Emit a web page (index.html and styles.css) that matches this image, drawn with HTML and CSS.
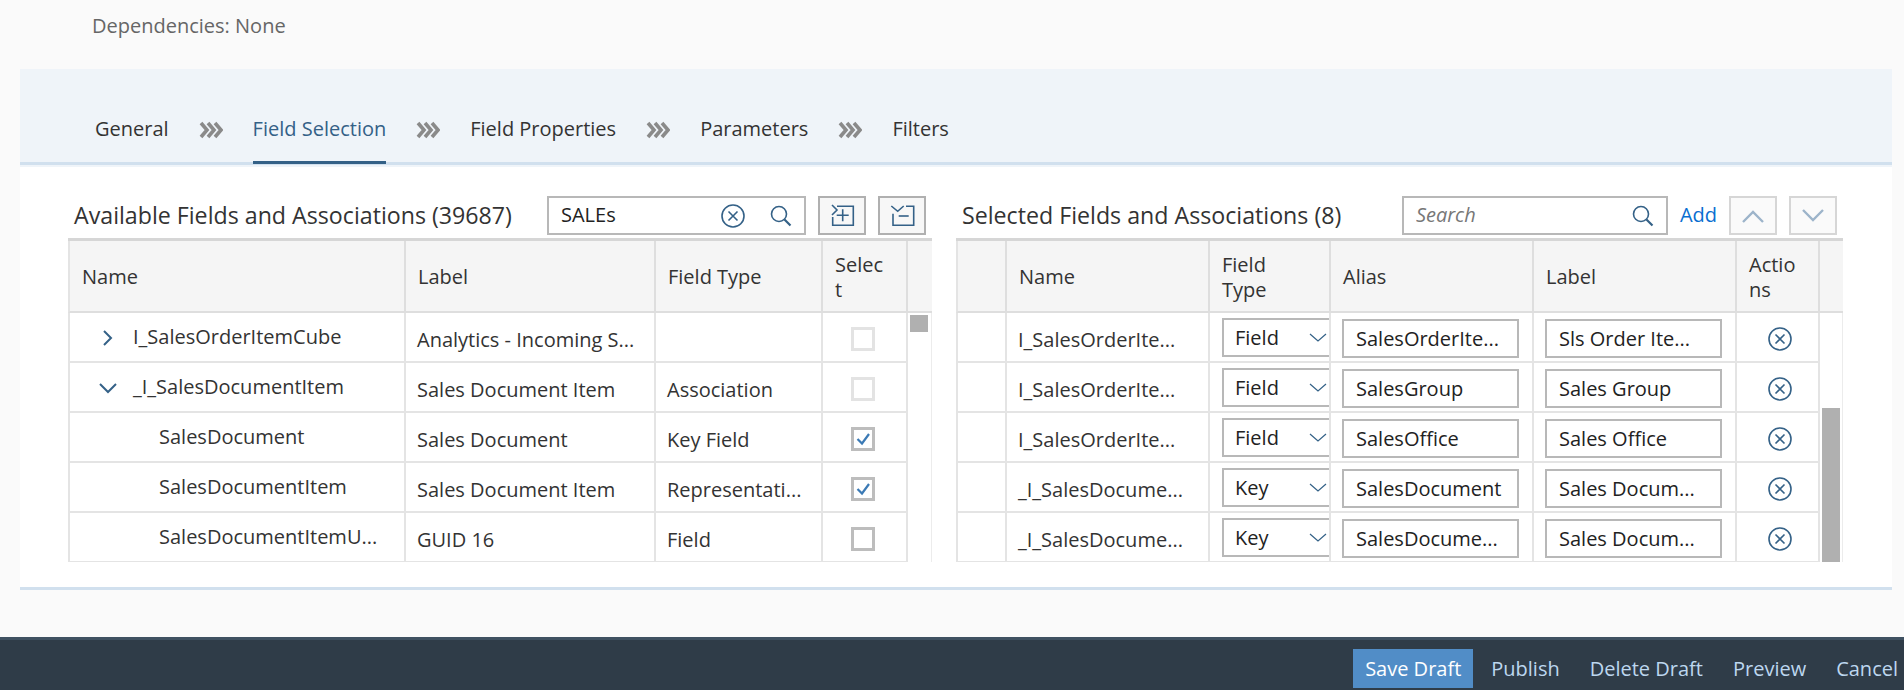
FILE: index.html
```html
<!DOCTYPE html>
<html lang="en">
<head>
  <meta charset="UTF-8">
  <title>Custom CDS View</title>
  <link rel="stylesheet" href="styles.css">
</head>
<body>
  <svg class="defs" width="0" height="0">
    <symbol id="i-chevrons" viewBox="0 0 24 18">
      <path d="M2 2l6 7-6 7M9 2l6 7-6 7M16 2l6 7-6 7" fill="none" stroke="#8a8a8a" stroke-width="3.6"/>
    </symbol>
    <symbol id="i-clear" viewBox="0 0 24 24">
      <circle cx="12" cy="12" r="11" fill="none" stroke="#346187" stroke-width="1.6"/>
      <path d="M7.5 7.5l9 9M16.5 7.5l-9 9" fill="none" stroke="#346187" stroke-width="1.6"/>
    </symbol>
    <symbol id="i-search" viewBox="0 0 22 22">
      <circle cx="9" cy="9" r="7.5" fill="none" stroke="#346187" stroke-width="1.6"/>
      <path d="M14.5 14.5l6 6" fill="none" stroke="#346187" stroke-width="2.2"/>
    </symbol>
    <symbol id="i-check" viewBox="0 0 18 18">
      <path d="M3.5 9l4.5 4.5L15 4" fill="none" stroke="#3b7ab5" stroke-width="2.2"/>
    </symbol>
  </svg>

  <div class="deps">Dependencies: None</div>

  <main class="panel">
    <nav class="tabs">
      <div class="tab-row">
        <a class="tab">General</a>
        <svg class="tab-sep"><use href="#i-chevrons"/></svg>
        <a class="tab active">Field Selection</a>
        <svg class="tab-sep"><use href="#i-chevrons"/></svg>
        <a class="tab">Field Properties</a>
        <svg class="tab-sep"><use href="#i-chevrons"/></svg>
        <a class="tab">Parameters</a>
        <svg class="tab-sep"><use href="#i-chevrons"/></svg>
        <a class="tab">Filters</a>
      </div>
    </nav>

    <div class="content">
      <section class="pane pane-left">
        <header class="pane-head">
          <h2>Available Fields and Associations (39687)</h2>
          <div class="search search-left">
            <input type="text" value="SALEs">
            <svg class="search-clear"><use href="#i-clear"/></svg>
            <svg class="search-icon"><use href="#i-search"/></svg>
          </div>
          <button class="tool">
            <svg width="26" height="24" viewBox="0 0 26 24" fill="none" stroke="#346187" stroke-width="1.6">
              <path d="M3 1l5 5-5 5M8 2.3h16.3v19H3.7V13"/>
              <path d="M7.7 11.3h12M13.7 5.3v12"/>
            </svg>
          </button>
          <button class="tool">
            <svg width="26" height="24" viewBox="0 0 26 24" fill="none" stroke="#346187" stroke-width="1.6">
              <path d="M2.3 2l6.4 5.3L14.7 2M17 2.3h7.7v19H4V9.7"/>
              <path d="M9.7 12h10"/>
            </svg>
          </button>
        </header>

        <div class="grid-wrap">
          <table class="grid">
            <colgroup>
              <col class="w-338"><col class="w-250"><col class="w-167"><col class="w-85"><col class="w-24">
            </colgroup>
            <thead>
              <tr><th>Name</th><th>Label</th><th>Field Type</th><th class="narrow">Select</th><th class="scroll-head"></th></tr>
            </thead>
            <tbody>
              <tr>
                <td class="tree up"><svg class="twist" viewBox="0 0 18 18"><path d="M5 2l7 7-7 7"/></svg>I_SalesOrderItemCube</td>
                <td>Analytics - Incoming S...</td>
                <td></td>
                <td class="check"><span class="box off"></span></td>
                <td class="scroll-cell"></td>
              </tr>
              <tr>
                <td class="tree up"><svg class="twist" viewBox="0 0 18 18"><path d="M1 5l8 8 8-8"/></svg>_I_SalesDocumentItem</td>
                <td>Sales Document Item</td>
                <td>Association</td>
                <td class="check"><span class="box off"></span></td>
                <td class="scroll-cell"></td>
              </tr>
              <tr>
                <td class="leaf up">SalesDocument</td>
                <td>Sales Document</td>
                <td>Key Field</td>
                <td class="check"><span class="box"><svg><use href="#i-check"/></svg></span></td>
                <td class="scroll-cell"></td>
              </tr>
              <tr>
                <td class="leaf up">SalesDocumentItem</td>
                <td>Sales Document Item</td>
                <td>Representati...</td>
                <td class="check"><span class="box"><svg><use href="#i-check"/></svg></span></td>
                <td class="scroll-cell"></td>
              </tr>
              <tr>
                <td class="leaf up">SalesDocumentItemU...</td>
                <td>GUID 16</td>
                <td>Field</td>
                <td class="check"><span class="box"></span></td>
                <td class="scroll-cell"></td>
              </tr>
            </tbody>
          </table>
          <div class="thumb thumb-left"></div>
        </div>
      </section>

      <section class="pane pane-right">
        <header class="pane-head">
          <h2>Selected Fields and Associations (8)</h2>
          <div class="search search-right">
            <input type="text" placeholder="Search">
            <svg class="search-icon"><use href="#i-search"/></svg>
          </div>
          <a class="add">Add</a>
          <button class="tool faded">
            <svg width="24" height="14" viewBox="0 0 24 14" fill="none" stroke="#9db4ca" stroke-width="2.4"><path d="M2 13L12 3l10 10"/></svg>
          </button>
          <button class="tool faded">
            <svg width="24" height="14" viewBox="0 0 24 14" fill="none" stroke="#9db4ca" stroke-width="2.4"><path d="M2 1l10 10L22 1"/></svg>
          </button>
        </header>

        <div class="grid-wrap">
          <table class="grid">
            <colgroup>
              <col class="w-51"><col class="w-203"><col class="w-121"><col class="w-203"><col class="w-203"><col class="w-83"><col class="w-23">
            </colgroup>
            <thead>
              <tr><th></th><th>Name</th><th class="narrow">Field Type</th><th>Alias</th><th>Label</th><th class="narrow">Actions</th><th class="scroll-head"></th></tr>
            </thead>
            <tbody>
              <tr>
                <td></td>
                <td>I_SalesOrderIte...</td>
                <td class="clip"><span class="select">Field<svg viewBox="0 0 18 9"><path d="M1 1l8 7 8-7"/></svg></span></td>
                <td class="edit"><input class="field" value="SalesOrderIte..."></td>
                <td class="edit"><input class="field" value="Sls Order Ite..."></td>
                <td class="action"><svg class="remove"><use href="#i-clear"/></svg></td>
                <td class="scroll-cell"></td>
              </tr>
              <tr>
                <td></td>
                <td>I_SalesOrderIte...</td>
                <td class="clip"><span class="select">Field<svg viewBox="0 0 18 9"><path d="M1 1l8 7 8-7"/></svg></span></td>
                <td class="edit"><input class="field" value="SalesGroup"></td>
                <td class="edit"><input class="field" value="Sales Group"></td>
                <td class="action"><svg class="remove"><use href="#i-clear"/></svg></td>
                <td class="scroll-cell"></td>
              </tr>
              <tr>
                <td></td>
                <td>I_SalesOrderIte...</td>
                <td class="clip"><span class="select">Field<svg viewBox="0 0 18 9"><path d="M1 1l8 7 8-7"/></svg></span></td>
                <td class="edit"><input class="field" value="SalesOffice"></td>
                <td class="edit"><input class="field" value="Sales Office"></td>
                <td class="action"><svg class="remove"><use href="#i-clear"/></svg></td>
                <td class="scroll-cell"></td>
              </tr>
              <tr>
                <td></td>
                <td>_I_SalesDocume...</td>
                <td class="clip"><span class="select">Key<svg viewBox="0 0 18 9"><path d="M1 1l8 7 8-7"/></svg></span></td>
                <td class="edit"><input class="field" value="SalesDocument"></td>
                <td class="edit"><input class="field" value="Sales Docum..."></td>
                <td class="action"><svg class="remove"><use href="#i-clear"/></svg></td>
                <td class="scroll-cell"></td>
              </tr>
              <tr>
                <td></td>
                <td>_I_SalesDocume...</td>
                <td class="clip"><span class="select">Key<svg viewBox="0 0 18 9"><path d="M1 1l8 7 8-7"/></svg></span></td>
                <td class="edit"><input class="field" value="SalesDocume..."></td>
                <td class="edit"><input class="field" value="Sales Docum..."></td>
                <td class="action"><svg class="remove"><use href="#i-clear"/></svg></td>
                <td class="scroll-cell"></td>
              </tr>
            </tbody>
          </table>
          <div class="thumb thumb-right"></div>
        </div>
      </section>
    </div>
  </main>

  <footer class="footer">
    <button class="foot-btn primary">Save Draft</button>
    <button class="foot-btn">Publish</button>
    <button class="foot-btn">Delete Draft</button>
    <button class="foot-btn">Preview</button>
    <button class="foot-btn">Cancel</button>
  </footer>
</body>
</html>
```

FILE: styles.css
```css
* { box-sizing: border-box; }
html, body { height: 690px; overflow: hidden; }
body { margin: 0; background: #fafafa; color: #333; font-family: "Open Sans", "Liberation Sans", sans-serif; font-size: 20px; }
.defs { display: block; height: 0; }

.deps { height: 69px; padding: 14px 0 0 92px; color: #666; line-height: 24px; }

.panel { margin: 0 12px 47px 20px; background: #fff; border-bottom: 3px solid #d1e0ee; }

.tabs { height: 98px; background: #eff4f9; }
.tab-row { display: flex; align-items: center; gap: 30px; height: 96px; padding: 29px 0 0 75px; border-bottom: 3px solid #d1e0ee; }
.tab { display: flex; align-items: center; height: 64px; margin-bottom: -3px; padding-bottom: 3px; border-bottom: 3px solid transparent; color: #333; }
.tab.active { color: #346187; border-bottom-color: #346187; }
.tab-sep { width: 24px; height: 18px; }

.content { display: flex; gap: 24px; padding: 29px 0 25px 48px; }
.pane-left { width: 864px; }
.pane-right { width: 887px; }
.pane-head { display: flex; align-items: center; gap: 12px; height: 39px; margin-bottom: 3px; padding: 0 6px; }
.pane-head h2 { margin: 0 auto 0 0; padding-bottom: 2px; font-size: 23.2px; font-weight: 400; color: #333; white-space: nowrap; }

.search { position: relative; height: 39px; background: #fff; border: 2px solid #b8b8b8; }
.search input { width: 100%; height: 100%; padding: 0 0 2px 12px; border: 0; outline: 0; background: none; font: inherit; color: #222; }
.search input::placeholder { color: #777; font-style: italic; opacity: 1; }
.search-left { width: 259px; }
.search-right { width: 266px; }
.search-clear { position: absolute; top: 6px; left: 172px; width: 24px; height: 24px; }
.search-icon { position: absolute; top: 7px; right: 12px; width: 22px; height: 22px; }

.tool { display: flex; align-items: center; justify-content: center; width: 48px; height: 39px; padding: 0; background: #f7f7f7; border: 2px solid #b0b0b0; }
.tool.faded { background: #fafafa; border-color: #d6d6d6; }
.add { padding-bottom: 2px; color: #0a6ed1; }

.grid-wrap { position: relative; height: 324px; overflow: hidden; border-top: 3px solid #d6d6d6; }
.grid { width: 100%; border-collapse: separate; border-spacing: 0; table-layout: fixed; }
.w-338 { width: 338px; } .w-250 { width: 250px; } .w-167 { width: 167px; } .w-85 { width: 85px; } .w-24 { width: 24px; }
.w-51 { width: 51px; } .w-203 { width: 203px; } .w-121 { width: 121px; } .w-83 { width: 83px; } .w-23 { width: 23px; }

.grid th, .grid td { padding: 0 12px; border-right: 2px solid #e4e4e4; border-bottom: 2px solid #e4e4e4; white-space: nowrap; overflow: hidden; font-weight: 400; text-align: left; }
.grid th:first-child, .grid td:first-child { border-left: 2px solid #e4e4e4; }
.grid th { height: 72px; padding-top: 1px; background: #f5f5f5; color: #333; white-space: normal; line-height: 25px; border-color: #dedede; }
.grid th.narrow { padding-right: 18px; overflow-wrap: anywhere; }
.grid td { height: 50px; padding-left: 11px; padding-top: 4px; color: #333; }
.grid td.scroll-cell { border: 0; border-right: 1px solid #ececec; padding: 0; }
.grid th.scroll-head { border-right: 0; padding: 0; }
.grid td.up { padding-top: 0; padding-bottom: 2px; }
.grid td.check { padding: 0 3px 0 0; text-align: center; }
.grid td.action { padding: 0 0 0 5px; text-align: center; }
.grid td.edit { padding: 2px 12px 0 11px; }
.grid td.clip { padding: 1px 0 0 12px; }

.grid td.tree { padding-left: 29px; }
.grid td.leaf { padding-left: 89px; }
.twist { width: 18px; height: 18px; margin-right: 16px; vertical-align: -3px; fill: none; stroke: #346187; stroke-width: 2; }

.box { display: inline-block; width: 24px; height: 24px; vertical-align: middle; background: #fff; border: 3px solid #bdbdbd; }
.box.off { border-color: #e3e3e3; }
.box svg { display: block; width: 18px; height: 18px; }

.select { display: flex; align-items: center; justify-content: space-between; width: 118px; height: 39px; padding-left: 11px; background: #fff; border: 2px solid #b8b8b8; color: #222; }
.select svg { flex: none; width: 18px; height: 9px; margin-right: 11px; fill: none; stroke: #346187; stroke-width: 1.2; }
.field { display: block; width: 177px; height: 39px; padding: 0 12px; background: #fff; border: 2px solid #b8b8b8; font: inherit; color: #222; outline: 0; }
.remove { display: inline-block; width: 24px; height: 24px; vertical-align: middle; }

.thumb { position: absolute; width: 18px; background: #b0b0b0; }
.thumb-left { left: 842px; top: 74px; height: 17px; }
.thumb-right { left: 866px; top: 167px; height: 154px; }

.footer { display: flex; justify-content: flex-end; gap: 6px; height: 53px; margin-right: -6px; padding-top: 9px; background: #2f3c48; border-top: 3px solid #3f5161; }
.foot-btn { height: 39px; padding: 0 12px; background: none; border: 0; color: #bdd7ef; font: inherit; }
.foot-btn.primary { background: #518dc7; color: #fff; }
```
